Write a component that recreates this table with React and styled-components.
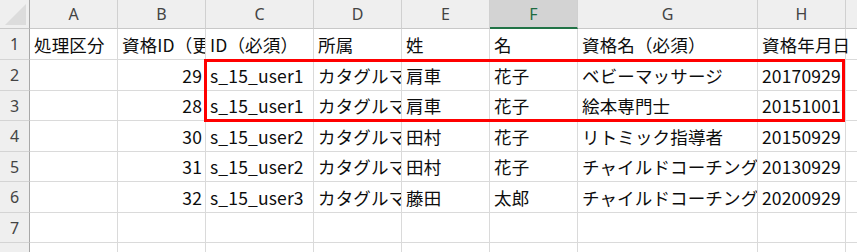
import React from "react";
import styled, { createGlobalStyle } from "styled-components";

const GlobalStyle = createGlobalStyle`
  html, body {
    margin: 0;
    padding: 0;
    background: #ffffff;
    overflow: hidden;
  }
  body {
    font-family: "Noto Sans CJK JP", "Noto Sans", sans-serif;
  }
`;

const Sheet = styled.div`
  position: relative;
  width: 857px;
  height: 252px;
  overflow: hidden;
  display: grid;
  grid-template-columns: 30px 88px 88px 108px 88px 88px 88px 180px 88px 40px;
  grid-auto-rows: 31px;
  grid-template-rows: 29px 31px 31px 30px 31px 30px 31px 30px 31px;
`;

const Corner = styled.div`
  position: relative;
  background: #efefef;
  border-right: 1px solid #a8a8a8;
  border-bottom: 1px solid #c8c8c8;
  box-sizing: border-box;
  &::after {
    content: "";
    position: absolute;
    right: 3px;
    bottom: 3px;
    width: 0;
    height: 0;
    border-left: 21px solid transparent;
    border-bottom: 21px solid #dcdcdc;
  }
`;

const ColHead = styled.div`
  box-sizing: border-box;
  background: ${(p) => (p.$active ? "#d3d3d3" : "#efefef")};
  color: ${(p) => (p.$active ? "#1e6b41" : "#444444")};
  border-right: 1px solid #d0d0d0;
  border-bottom: ${(p) => (p.$active ? "2px solid #217346" : "1px solid #c8c8c8")};
  font-family: "Noto Sans", "Liberation Sans", sans-serif;
  font-size: 16px;
  display: flex;
  align-items: center;
  justify-content: center;
  padding-bottom: ${(p) => (p.$active ? "0" : "1px")};
`;

const RowHead = styled.div`
  box-sizing: border-box;
  background: #efefef;
  color: #444444;
  border-right: 1px solid #a8a8a8;
  border-bottom: 1px solid #d4d4d4;
  font-family: "Noto Sans", "Liberation Sans", sans-serif;
  font-size: 16px;
  display: flex;
  align-items: center;
  justify-content: center;
`;

const Cell = styled.div`
  position: relative;
  z-index: ${(p) => (p.$spill ? 1 : 0)};
  box-sizing: border-box;
  border-right: 1px solid #dadada;
  border-bottom: 1px solid #dadada;
  overflow: ${(p) => (p.$spill ? "visible" : "hidden")};
  white-space: nowrap;
  color: #0d0d0d;
  font-size: 17.5px;
  letter-spacing: 0.15px;
  line-height: 1;
  display: flex;
  align-items: center;
  justify-content: ${(p) => (p.$num ? "flex-end" : "flex-start")};
  padding: 1px ${(p) => (p.$num ? "3px" : "0")} 0 ${(p) => (p.$num ? "0" : "4px")};
`;

const Highlight = styled.div`
  position: absolute;
  z-index: 2;
  left: 204px;
  top: 59px;
  width: 641px;
  height: 63px;
  box-sizing: border-box;
  border: 3px solid #ff0000;
  pointer-events: none;
`;

const columns = ["A", "B", "C", "D", "E", "F", "G", "H", "I"];

const rows = [
  ["処理区分", "資格ID（更新時のみ）", "ID（必須）", "所属", "姓", "名", "資格名（必須）", "資格年月日", ""],
  ["", 29, "s_15_user1", "カタグルマ", "肩車", "花子", "ベビーマッサージ", "20170929", ""],
  ["", 28, "s_15_user1", "カタグルマ", "肩車", "花子", "絵本専門士", "20151001", ""],
  ["", 30, "s_15_user2", "カタグルマ", "田村", "花子", "リトミック指導者", "20150929", ""],
  ["", 31, "s_15_user2", "カタグルマ", "田村", "花子", "チャイルドコーチング", "20130929", ""],
  ["", 32, "s_15_user3", "カタグルマ", "藤田", "太郎", "チャイルドコーチング", "20200929", ""],
  ["", "", "", "", "", "", "", "", ""],
  ["", "", "", "", "", "", "", "", ""],
];

export default function App() {
  return (
    <>
      <GlobalStyle />
      <Sheet>
        <Corner />
        {columns.map((c) => (
          <ColHead key={c} $active={c === "F"}>
            {c}
          </ColHead>
        ))}
        {rows.map((row, r) => (
          <React.Fragment key={r}>
            <RowHead>{r + 1}</RowHead>
            {row.map((v, c) => (
              <Cell
                key={c}
                $num={typeof v === "number"}
                $spill={v !== "" && row[c + 1] === ""}
              >
                {v}
              </Cell>
            ))}
          </React.Fragment>
        ))}
        <Highlight />
      </Sheet>
    </>
  );
}
